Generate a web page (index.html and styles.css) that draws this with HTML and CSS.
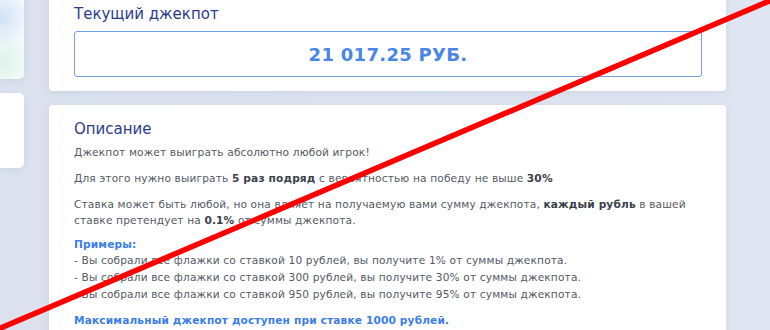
FILE: index.html
```html
<!DOCTYPE html>
<html lang="ru">
<head>
<meta charset="utf-8">
<title>Джекпот</title>
<link rel="stylesheet" href="styles.css">
</head>
<body>
<div class="page">
  <aside class="side">
    <div class="side-card side-card--art"></div>
    <div class="side-card side-card--plain"></div>
  </aside>
  <main class="main">
    <section class="card card--jackpot">
      <h2 class="card-title">Текущий джекпот</h2>
      <div class="jackpot-box">21 017.25 РУБ.</div>
    </section>
    <section class="card card--desc">
      <h2 class="card-title">Описание</h2>
      <p class="para">Джекпот может выиграть абсолютно любой игрок!</p>
      <p class="para">Для этого нужно выиграть <b>5 раз подряд</b> с вероятностью на победу не выше <b>30%</b></p>
      <p class="para para--tight">Ставка может быть любой, но она влияет на получаемую вами сумму джекпота, <b>каждый рубль</b> в вашей ставке претендует на <b>0.1%</b> от суммы джекпота.</p>
      <p class="para para--accent">Примеры:</p>
      <ul class="examples">
        <li>- Вы собрали все флажки со ставкой 10 рублей, вы получите 1% от суммы джекпота.</li>
        <li>- Вы собрали все флажки со ставкой 300 рублей, вы получите 30% от суммы джекпота.</li>
        <li>- Вы собрали все флажки со ставкой 950 рублей, вы получите 95% от суммы джекпота.</li>
      </ul>
      <p class="para para--accent para--max">Максимальный джекпот доступен при ставке 1000 рублей.</p>
    </section>
  </main>
</div>
<svg class="strike" width="770" height="330" viewBox="0 0 770 330" aria-hidden="true">
  <line x1="-4" y1="330" x2="774" y2="-1" stroke="#ff0000" stroke-width="5.5"/>
</svg>
</body>
</html>
```

FILE: styles.css
```css
html, body {
  margin: 0;
  padding: 0;
}
body {
  width: 770px;
  height: 330px;
  overflow: hidden;
  position: relative;
  background: #dfe5f0;
  font-family: "DejaVu Sans", "Noto Sans", sans-serif;
  color: #545a66;
}
.page {
  display: flex;
  gap: 25px;
  margin-top: -10px;
  background: linear-gradient(90deg, #dbe2ee 0%, #e0e6f1 100%);
  min-height: 400px;
}
.side {
  width: 24px;
  flex: none;
  display: flex;
  flex-direction: column;
  gap: 14px;
}
.side-card {
  background: #ffffff;
  border-radius: 0 5px 5px 0;
  box-shadow: 0 2px 6px rgba(120, 140, 180, 0.15);
}
.side-card--art {
  height: 89px;
  background:
    radial-gradient(ellipse 26px 30px at 2px 28px, rgba(200, 222, 246, 0.85), rgba(255,255,255,0) 100%),
    radial-gradient(ellipse 26px 30px at 4px 72px, rgba(214, 242, 230, 0.85), rgba(255,255,255,0) 100%),
    linear-gradient(180deg, #f5f8fd 0%, #f7fbfa 100%);
}
.side-card--plain {
  height: 75px;
}
.main {
  width: 677px;
  flex: none;
  display: flex;
  flex-direction: column;
  gap: 14px;
}
.card {
  background: #ffffff;
  border-radius: 4px;
  box-shadow: 0 2px 8px rgba(120, 140, 180, 0.18);
  padding: 14px 24px 14px 25px;
}
.card-title {
  margin: 0 0 5px;
  font-size: 15px;
  line-height: 20px;
  font-weight: normal;
  color: #2c3b8e;
}
.jackpot-box {
  margin-top: 7px;
  height: 44px;
  border: 1px solid #76a0e8;
  border-radius: 3px;
  display: flex;
  align-items: center;
  justify-content: center;
  font-size: 18px;
  font-weight: bold;
  color: #4a86e8;
  letter-spacing: 0.3px;
}
.card--jackpot .card-title {
  margin-bottom: 0;
}
.card--desc {
  padding-bottom: 30px;
}
.para {
  margin: 0 0 10px;
  font-size: 10.6px;
  line-height: 16px;
  letter-spacing: 0.15px;
}
.para--tight {
  margin-bottom: 8px;
}
.para b {
  color: #3a3f4a;
}
.para--accent {
  color: #3b7de9;
  font-weight: bold;
  margin-bottom: 0;
}
.examples {
  list-style: none;
  margin: 0;
  padding: 0;
  font-size: 10.6px;
  line-height: 17px;
  letter-spacing: 0.15px;
}
.para--max {
  margin-top: 9px;
}
.strike {
  position: absolute;
  left: 0;
  top: 0;
  pointer-events: none;
}
```
